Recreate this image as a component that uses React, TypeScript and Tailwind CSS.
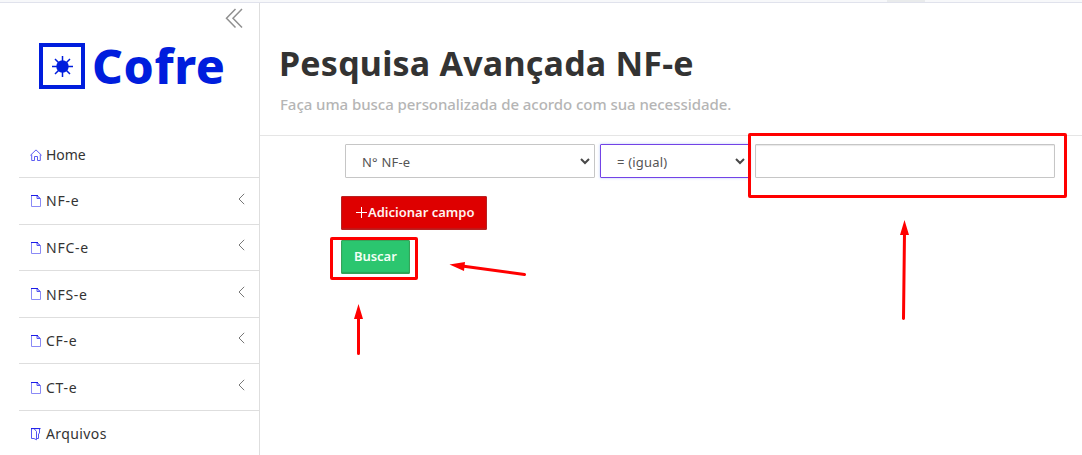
import React from "react";

function FileIcon() {
  return (
    <svg width="12" height="13" viewBox="0 0 12 13" fill="none">
      <path d="M1.5 0.5H7L10.5 3.5V11.5H1.5Z" stroke="#8a8af6" />
      <path d="M1 0.5H8" stroke="#1c1ce8" />
      <path d="M7 1V3.5H10L7.5 1" stroke="#4343ee" strokeWidth="0.9" />
    </svg>
  );
}

function HomeIcon() {
  return (
    <svg width="12" height="13" viewBox="0 0 12 13" fill="none" stroke="#5c5cf2">
      <path d="M0.4 6.3L6 0.9L11.6 6.3M1.7 5.5V11.5H4.5V7.5H7.5V11.5H10.3V5.5" />
    </svg>
  );
}

function FilesIcon() {
  return (
    <svg width="12" height="13" viewBox="0 0 12 13" fill="none" stroke="#5555f2">
      <path d="M1.5 0.5V10.5H4L6.5 11.8V3.5L4.2 0.8M7 10.5H8.5V6L9.5 5V1" />
      <path d="M1 0.6H10.5" stroke="#1010e8" />
    </svg>
  );
}

const items = [
  { label: "Home", icon: <HomeIcon />, chevron: false },
  { label: "NF-e", icon: <FileIcon />, chevron: true },
  { label: "NFC-e", icon: <FileIcon />, chevron: true },
  { label: "NFS-e", icon: <FileIcon />, chevron: true },
  { label: "CF-e", icon: <FileIcon />, chevron: true },
  { label: "CT-e", icon: <FileIcon />, chevron: true },
  { label: "Arquivos", icon: <FilesIcon />, chevron: false },
];

function Sidebar() {
  return (
    <aside className="h-full w-[260px] shrink-0 border-r border-[#dedede] pl-[19px]">
      <div className="flex h-[28px] justify-end pr-[15px] pt-[5px]">
        <svg width="19" height="21" viewBox="0 0 19 21" fill="none" stroke="#909090" strokeWidth="1.5">
          <path d="M10.5 1L1.5 10.3L10.5 19.5M17 1L8 10.3L17 19.5" />
        </svg>
      </div>
      <div className="flex h-[100.5px] items-start pl-5 pt-3">
        <svg width="46" height="46" viewBox="0 0 46 46" className="shrink-0" fill="none" stroke="#001ddd">
          <rect x="2" y="2" width="42" height="42" strokeWidth="4" />
          <circle cx="23.5" cy="23.5" r="6.2" fill="#001ddd" stroke="none" />
          <path d="M23.5 13V34M13 23.5H34M16 16L31 31M31 16L16 31" strokeWidth="1.5" />
        </svg>
        <span className="ml-[7px] mt-[-9px] font-['Noto_Sans'] text-[48px] leading-[64px] font-extrabold tracking-[0.6px] text-[#001ddd]">Cofre</span>
      </div>
      <nav>
        {items.map((item) => (
          <div key={item.label} className="flex h-[46.55px] items-center border-b border-[#dedede] pl-[11px] pr-[14px]">
            <span className="pt-[2px]">{item.icon}</span>
            <span className={"ml-1 grow pt-[1.2px] text-[14px] leading-5 text-[#333] " + (item.chevron ? "tracking-[0.75px]" : item.label === "Home" ? "tracking-[-0.1px]" : "tracking-[0.4px]")}>{item.label}</span>
            {item.chevron && (
              <svg width="7" height="12" viewBox="0 0 7 12" className="-mt-1" fill="none" stroke="#777">
                <path d="M6.2 0.8L1 6L6.2 11.2" />
              </svg>
            )}
          </div>
        ))}
      </nav>
    </aside>
  );
}

function Select({ label, className }: { label: string; className: string }) {
  return (
    <div className={"flex h-[34px] items-center justify-between rounded-[1px] border pl-4 pr-1 text-[13px] tracking-[0.2px] text-[#555] " + className}>
      <span className="pt-[3px]">{label}</span>
      <svg width="10" height="7" viewBox="0 0 10 7" fill="none" stroke="#484848" strokeWidth="2">
        <path d="M1 1L5 5L9 1" />
      </svg>
    </div>
  );
}

export default function App() {
  return (
    <div className="relative flex h-[455px] w-[1082px] flex-col overflow-hidden bg-white font-['Noto_Sans',sans-serif]">
      <div className="flex h-[3px] shrink-0 border-b border-[#e0e2ec] bg-[#f7f8fa]">
        <div className="ml-[887px] h-[2px] w-[38px] bg-[#e9ebec]" />
      </div>
      <div className="flex min-h-0 grow">
        <Sidebar />
        <main className="grow">
          <header className="h-[133px] border-b border-[#e5e5e5] pl-5 pt-9">
            <h1 className="ml-[-1px] text-[34px] leading-[48px] font-bold tracking-[0.22px] whitespace-nowrap text-[#333]">Pesquisa Avançada NF-e</h1>
            <p className="mt-[5px] text-[15px] leading-6 font-medium tracking-[-0.05px] whitespace-nowrap text-[#b5b5b5]">Faça uma busca personalizada de acordo com sua necessidade.</p>
          </header>
          <div className="flex pl-[85px] pt-2">
            <Select label="N° NF-e" className="w-[250px] border-[#c6c6c6]" />
            <Select label="= (igual)" className="ml-[5px] w-[150px] border-[#7343e6] shadow-[0_0_3px_#b9ccfa]" />
            <div className="ml-[5px] h-[34px] w-[300px] rounded-[1px] border border-[#c6c6c6] shadow-[inset_0_1px_1px_#e8e8e8]" />
          </div>
          <div className="flex flex-col items-start gap-[10px] pl-[81px] pt-[18px]">
            <button className="flex h-[34px] w-[146px] items-center rounded-[1px] border border-[#b82222] bg-[#de0000] pl-[14px] text-[13px] font-semibold whitespace-nowrap text-[#fff3f0] shadow-[inset_0_-1px_1px_#c01818]">
              <svg width="11" height="11" viewBox="0 0 11 11" className="mr-[1px] mt-[-2px] shrink-0" stroke="#fff">
                <path d="M5.5 0V11M0 5.5H11" />
              </svg>
              <span>Adicionar campo</span>
            </button>
            <button className="h-[34px] w-[69px] rounded-[1px] border border-[#36a35a] bg-[#2bc66f] pl-3 text-left text-[13px] font-semibold tracking-[-0.05px] text-[#f3fff6] shadow-[inset_0_-1px_1px_#2aa555]">Buscar</button>
          </div>
        </main>
      </div>
      <div className="absolute left-[748px] top-[133px] h-[65px] w-[319px] rounded-[2px] border-3 border-[#ff0000]" />
      <div className="absolute left-[330px] top-[237px] h-[43px] w-[88px] rounded-[2px] border-3 border-[#ff0000]" />
      <svg className="absolute left-0 top-0" width="1082" height="455" viewBox="0 0 1082 455" fill="#f00" stroke="#f00" strokeWidth="3">
        <path d="M358.5 353.5V317M524.5 274.5L462 266M903.5 318.5L904.5 233" strokeLinecap="round" />
        <path d="M358.5 304L363 319H354ZM449.5 264.5L465 262L464 271ZM904.5 220L909 235H900Z" stroke="none" />
      </svg>
    </div>
  );
}
